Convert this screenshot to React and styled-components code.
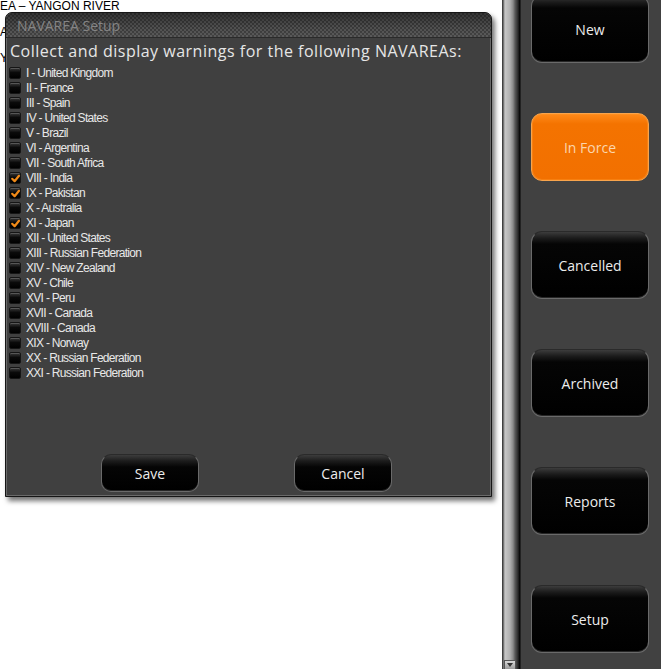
import React from 'react';
import styled, { createGlobalStyle } from 'styled-components';

const GlobalStyle = createGlobalStyle`
  html, body {
    margin: 0;
    padding: 0;
    background: #fff;
    overflow: hidden;
  }
`;

const Screen = styled.div`
  display: flex;
  width: 661px;
  height: 669px;
  overflow: hidden;
  font-family: "Liberation Sans", Arial, sans-serif;
`;

const Backdrop = styled.div`
  position: relative;
  flex: none;
  width: 502px;
  background: #fff;
`;

const BackLines = styled.div`
  display: flex;
  flex-direction: column;
  gap: 13px;
  font-size: 12px;
  line-height: 13px;
  color: #000;
`;

const Dialog = styled.div`
  position: absolute;
  left: 5px;
  top: 12px;
  width: 487px;
  height: 485px;
  box-sizing: border-box;
  display: flex;
  flex-direction: column;
  background: #404040;
  border: 1px solid #161616;
  border-radius: 7px 7px 0 0;
  box-shadow: inset 0 0 0 1px #6a6a6a, 3px 4px 5px rgba(0, 0, 0, 0.55);
  overflow: hidden;
`;

const TitleBar = styled.div`
  height: 24px;
  flex: none;
  padding-left: 11px;
  font-family: "Open Sans", sans-serif;
  font-size: 14px;
  line-height: 25px;
  color: #858585;
  border-bottom: 1px solid #2a2a2a;
  background:
    linear-gradient(to bottom, rgba(20, 20, 20, 0.55), rgba(40, 40, 40, 0.2) 60%, rgba(90, 90, 90, 0.25)),
    repeating-conic-gradient(#5a5a5a 0 25%, #3c3c3c 0 50%) 0 0 / 4px 4px;
`;

const Body = styled.div`
  flex: 1;
  display: flex;
  flex-direction: column;
  padding: 3px 4px 4px 4px;
`;

const Heading = styled.div`
  font-family: "Open Sans", sans-serif;
  font-size: 16px;
  letter-spacing: 0.5px;
  line-height: 20px;
  color: #e6e6e6;
  white-space: nowrap;
`;

const List = styled.div`
  display: flex;
  flex-direction: column;
  margin: 4px 0 0 -1px;
`;

const Row = styled.div`
  display: flex;
  align-items: center;
  gap: 5px;
  height: 15px;
  font-size: 12px;
  letter-spacing: -0.7px;
  color: #e8e8e8;
`;

const Box = styled.span`
  position: relative;
  width: 12px;
  height: 12px;
  box-sizing: border-box;
  border-radius: 2px;
  border: 1px solid #151515;
  background: linear-gradient(to bottom, #3a3a3a, #0a0a0a 45%, #000);
  box-shadow: inset 0 1px 0 rgba(120, 120, 120, 0.5);
`;

const Tick = styled.svg`
  position: absolute;
  left: 0;
  top: 0;
  width: 11px;
  height: 11px;
`;

const ButtonRow = styled.div`
  margin-top: auto;
  display: flex;
  justify-content: center;
  gap: 95px;
  padding-right: 4px;
`;

const GlossButton = styled.div`
  display: flex;
  align-items: center;
  justify-content: center;
  box-sizing: border-box;
  width: ${(p) => p.w}px;
  height: ${(p) => p.h}px;
  border-radius: ${(p) => p.r}px;
  font-family: "Open Sans", sans-serif;
  font-size: 14px;
  color: ${(p) => (p.active ? '#fbd6ae' : '#ececec')};
  border: 1px solid ${(p) => (p.active ? '#f8a44c' : '#6a6a6a')};
  border-top-color: ${(p) => (p.active ? '#f8a44c' : '#2a2a2a')};
  background: ${(p) => (p.active
    ? 'linear-gradient(to bottom, #ff8a1a 0, #f47300 10px, #f27000 100%)'
    : 'linear-gradient(to bottom, #3c3c3c 0, #1c1c1c 6px, #050505 12px, #000 100%)')};
  box-shadow: ${(p) => (p.active
    ? 'inset 0 0 0 1px rgba(255, 150, 40, 0.4)'
    : 'inset 0 -1px 0 rgba(110, 110, 110, 0.35)')};
`;

const ScrollTrack = styled.div`
  position: relative;
  flex: none;
  width: 18px;
  background: linear-gradient(to right,
    #2c2c2c 0, #555 1px, #c8c8c8 3px, #b0b0b0 8px, #8a8a8a 11px, #5a5a5a 13px, #2a2a2a 16px, #000 18px);
`;

const ScrollArrow = styled.div`
  position: absolute;
  left: 2px;
  bottom: 0;
  width: 12px;
  height: 9px;
  background: linear-gradient(#d8d8d8, #9a9a9a);
  border: 1px solid #555;
  border-bottom: none;
  box-sizing: border-box;
  display: flex;
  justify-content: center;
  padding-top: 2px;

  &::after {
    content: '';
    border-left: 3px solid transparent;
    border-right: 3px solid transparent;
    border-top: 4px solid #333;
    height: 0;
  }
`;

const Panel = styled.div`
  flex: 1;
  background: #414141;
  border-left: 1px solid #222;
  padding-left: 10px;
`;

const PanelColumn = styled.div`
  display: flex;
  flex-direction: column;
  gap: 50px;
  margin-top: -5px;
`;

const areas = [
  ['I - United Kingdom', false],
  ['II - France', false],
  ['III - Spain', false],
  ['IV - United States', false],
  ['V - Brazil', false],
  ['VI - Argentina', false],
  ['VII - South Africa', false],
  ['VIII - India', true],
  ['IX - Pakistan', true],
  ['X - Australia', false],
  ['XI - Japan', true],
  ['XII - United States', false],
  ['XIII - Russian Federation', false],
  ['XIV - New Zealand', false],
  ['XV - Chile', false],
  ['XVI - Peru', false],
  ['XVII - Canada', false],
  ['XVIII - Canada', false],
  ['XIX - Norway', false],
  ['XX - Russian Federation', false],
  ['XXI - Russian Federation', false],
];

const sideButtons = ['New', 'In Force', 'Cancelled', 'Archived', 'Reports', 'Setup'];

const CheckRow = ({ label, checked }) => (
  <Row>
    <Box>
      {checked && (
        <Tick viewBox="0 0 11 11">
          <path d="M2.2 5.8 L4.6 8.2 L9 2.8" fill="none" stroke="#f08a18" strokeWidth="2.2" strokeLinecap="round" strokeLinejoin="round" />
        </Tick>
      )}
    </Box>
    {label}
  </Row>
);

const App = () => (
  <Screen>
    <GlobalStyle />
    <Backdrop>
      <BackLines>
        <div>EA – YANGON RIVER</div>
        <div>A</div>
        <div>Y</div>
      </BackLines>
      <Dialog>
        <TitleBar>NAVAREA Setup</TitleBar>
        <Body>
          <Heading>Collect and display warnings for the following NAVAREAs:</Heading>
          <List>
            {areas.map(([label, checked]) => (
              <CheckRow key={label} label={label} checked={checked} />
            ))}
          </List>
          <ButtonRow>
            <GlossButton w={98} h={38} r={10}>Save</GlossButton>
            <GlossButton w={98} h={38} r={10}>Cancel</GlossButton>
          </ButtonRow>
        </Body>
      </Dialog>
    </Backdrop>
    <ScrollTrack>
      <ScrollArrow />
    </ScrollTrack>
    <Panel>
      <PanelColumn>
        {sideButtons.map((name) => (
          <GlossButton key={name} w={118} h={68} r={11} active={name === 'In Force'}>
            {name}
          </GlossButton>
        ))}
      </PanelColumn>
    </Panel>
  </Screen>
);

export default App;
